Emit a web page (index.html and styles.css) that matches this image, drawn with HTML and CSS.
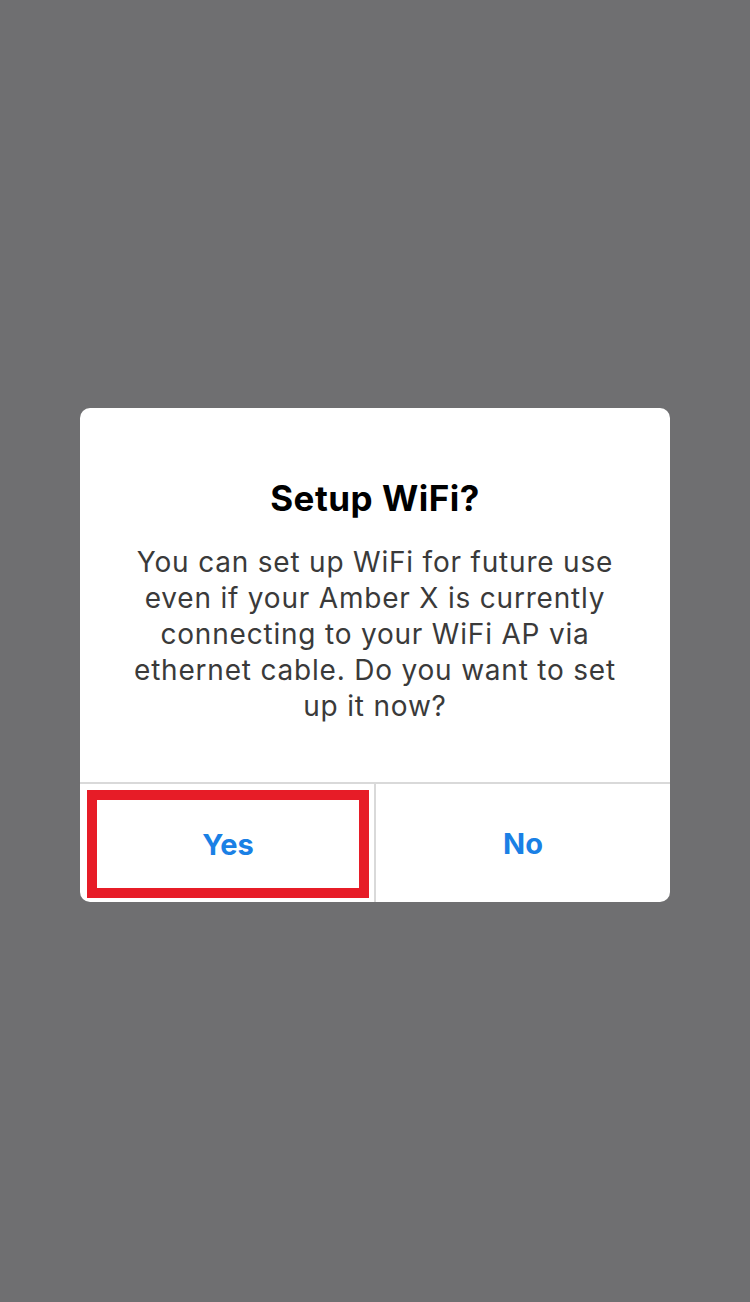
FILE: index.html
```html
<!DOCTYPE html>
<html>
<head>
<meta charset="utf-8">
<link rel="stylesheet" href="styles.css">
</head>
<body>
<div class="overlay">
  <div class="dialog">
    <div class="content">
      <h1 class="title">Setup WiFi?</h1>
      <p class="message">You can set up WiFi for future use even if your Amber X is currently connecting to your WiFi AP via ethernet cable. Do you want to set up it now?</p>
    </div>
    <div class="actions">
      <div class="action action-yes"><span class="highlight">Yes</span></div>
      <div class="action action-no">No</div>
    </div>
  </div>
</div>
</body>
</html>
```

FILE: styles.css
```css
html, body {
  margin: 0;
  padding: 0;
  height: 100%;
}
body {
  background: #6f6f71;
  font-family: Inter, "Noto Sans", sans-serif;
}
.overlay {
  display: flex;
  justify-content: center;
  padding-top: 408px;
}
.dialog {
  width: 590px;
  background: #ffffff;
  border-radius: 10px;
  overflow: hidden;
}
.content {
  height: 374px;
  box-sizing: border-box;
  padding: 70px 40px 0;
  text-align: center;
}
.title {
  margin: 0;
  font-size: 35px;
  font-weight: 700;
  line-height: 40px;
  letter-spacing: 0.5px;
  color: #000;
}
.message {
  margin: 26px auto 0;
  max-width: 500px;
  font-size: 28px;
  line-height: 36px;
  letter-spacing: 0.8px;
  color: #3a3a3a;
}
.actions {
  display: flex;
  border-top: 2px solid #d9d9d9;
  height: 118px;
}
.action {
  flex: 1;
  display: flex;
  align-items: center;
  justify-content: center;
  font-size: 29px;
  font-weight: 700;
  color: #1a80e5;
}
.action-yes {
  flex: 0 0 296px;
  box-sizing: border-box;
  border-right: 2px solid #d9d9d9;
  padding: 6px 5px 4px 7px;
}
.highlight {
  flex: 1;
  align-self: stretch;
  display: flex;
  align-items: center;
  justify-content: center;
  border: 10px solid #e71c27;
}
```
